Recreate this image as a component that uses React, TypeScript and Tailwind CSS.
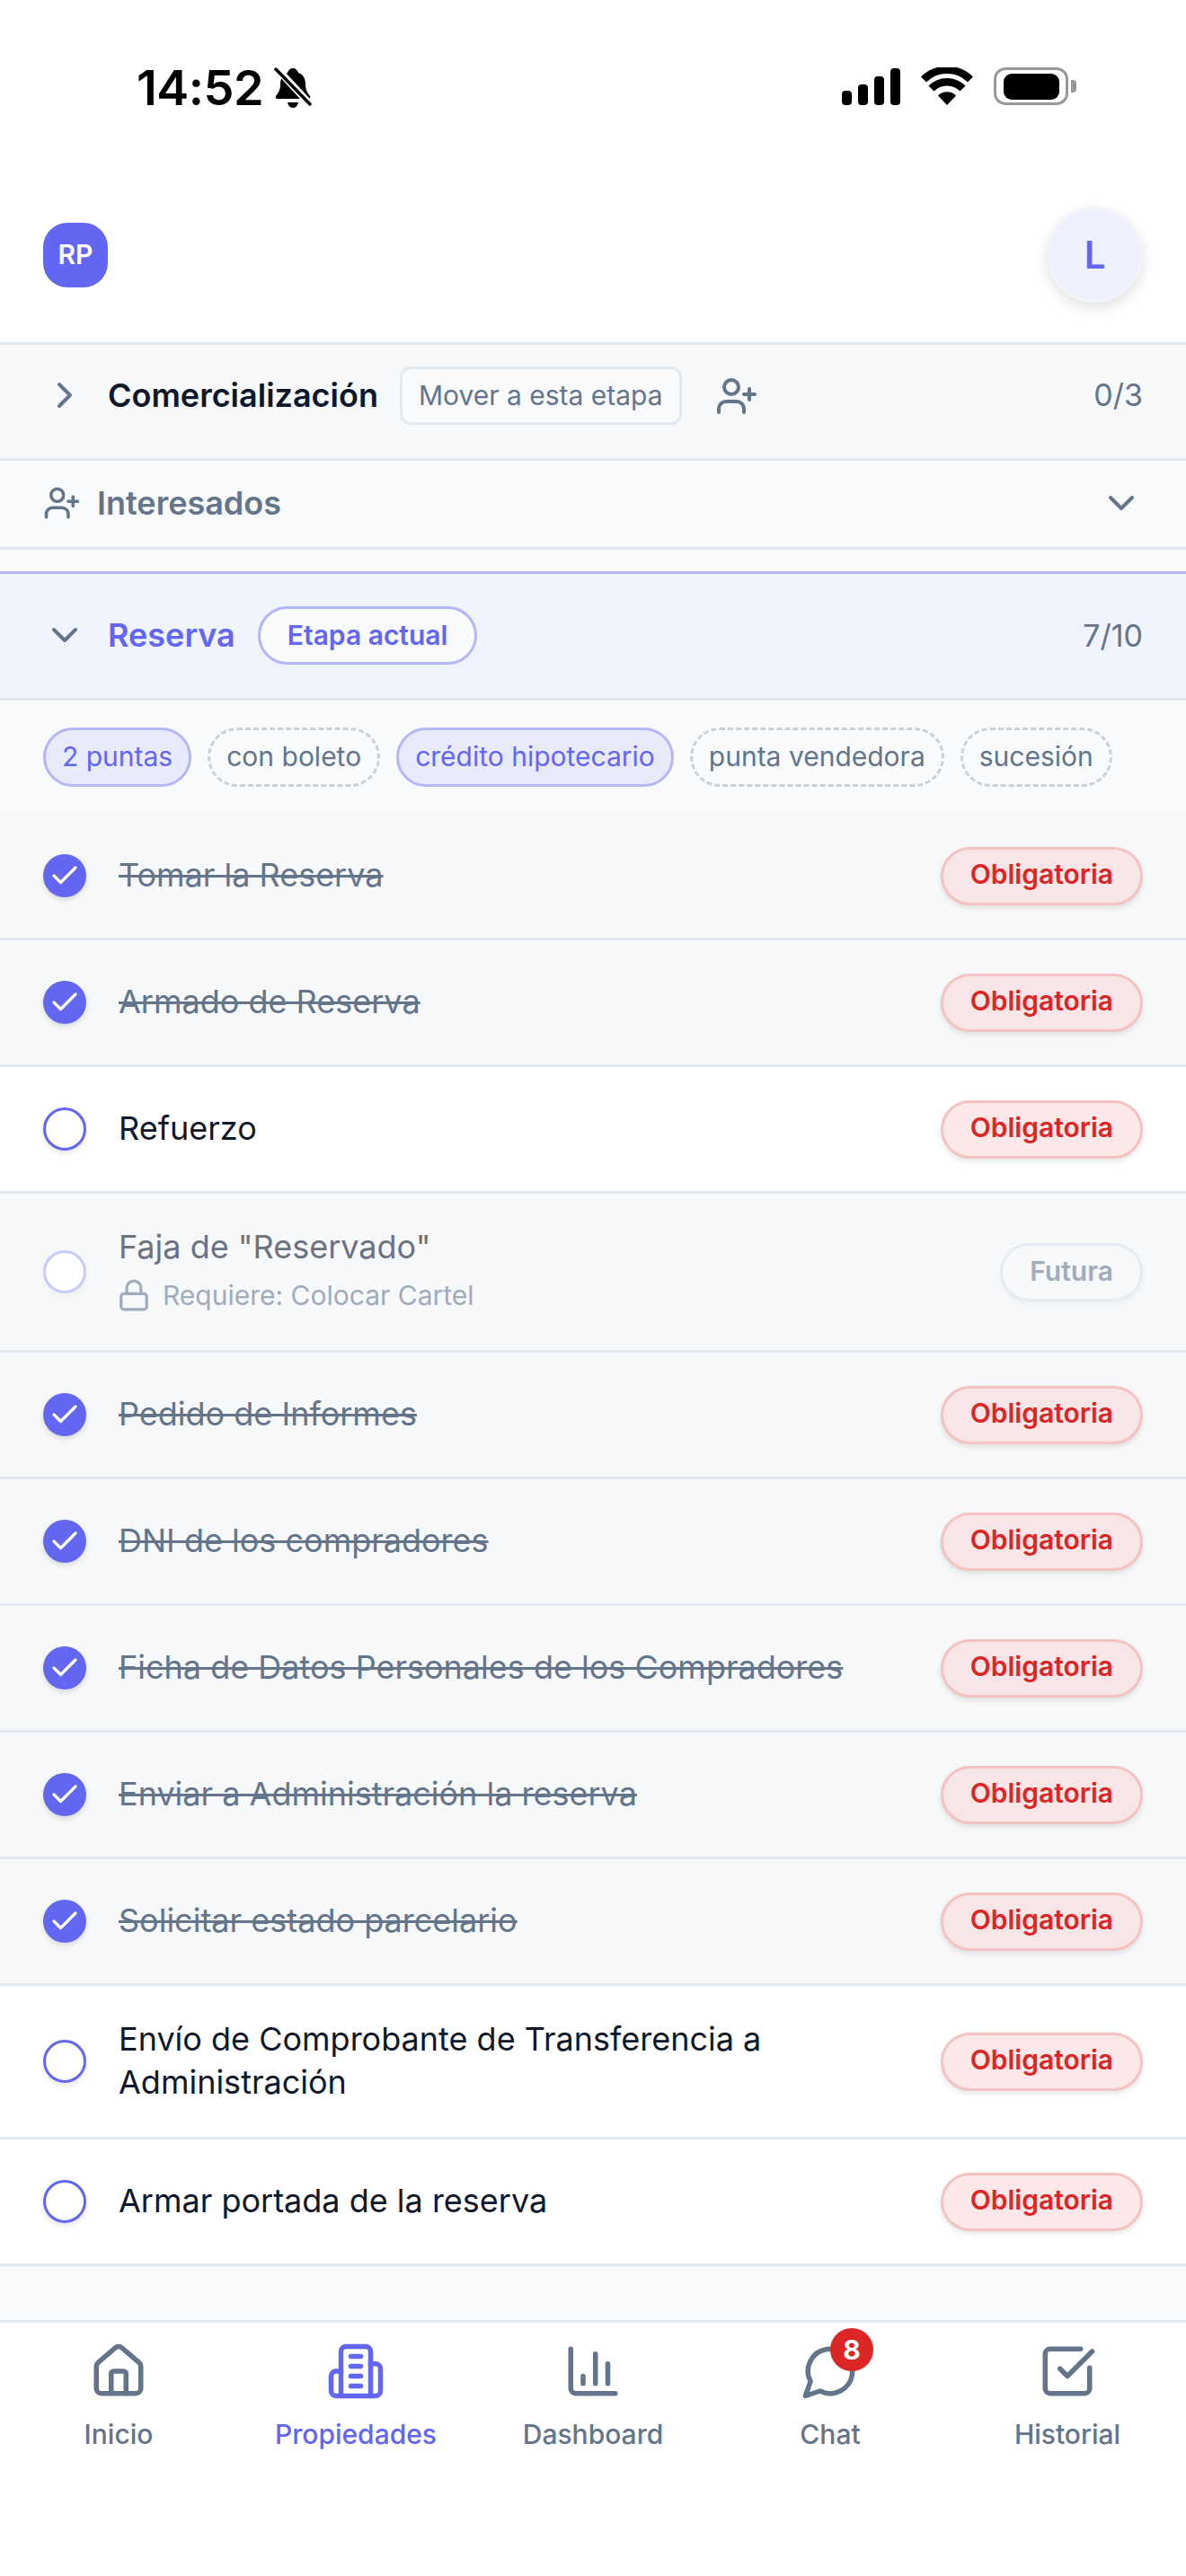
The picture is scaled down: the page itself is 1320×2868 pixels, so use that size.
import { ChartColumn, Check, ChevronDown, ChevronRight, House, Lock, SquareCheckBig, UserPlus } from 'lucide-react';

type TaskState = 'done' | 'open' | 'locked';

interface Task {
  title: string;
  state: TaskState;
  note?: string;
}

const tasks: Task[] = [
  { title: 'Tomar la Reserva', state: 'done' },
  { title: 'Armado de Reserva', state: 'done' },
  { title: 'Refuerzo', state: 'open' },
  { title: 'Faja de "Reservado"', state: 'locked', note: 'Requiere: Colocar Cartel' },
  { title: 'Pedido de Informes', state: 'done' },
  { title: 'DNI de los compradores', state: 'done' },
  { title: 'Ficha de Datos Personales de los Compradores', state: 'done' },
  { title: 'Enviar a Administración la reserva', state: 'done' },
  { title: 'Solicitar estado parcelario', state: 'done' },
  { title: 'Envío de Comprobante de Transferencia a Administración', state: 'open' },
  { title: 'Armar portada de la reserva', state: 'open' },
];

const chips = [
  { label: '2 puntas', active: true },
  { label: 'con boleto', active: false },
  { label: 'crédito hipotecario', active: true },
  { label: 'punta vendedora', active: false },
  { label: 'sucesión', active: false },
];

// older lucide shapes: the installed version draws these two differently
const TowerIcon = ({ size }: { size: number }) => (
  <svg width={size} height={size} viewBox="0 0 24 24" fill="none" stroke="currentColor" strokeWidth="2" strokeLinecap="round" strokeLinejoin="round">
    <path d="M6 22V4a2 2 0 0 1 2-2h8a2 2 0 0 1 2 2v18Z" />
    <path d="M6 12H4a2 2 0 0 0-2 2v6a2 2 0 0 0 2 2h2" />
    <path d="M18 9h2a2 2 0 0 1 2 2v9a2 2 0 0 1-2 2h-2" />
    <path d="M10 6h4" />
    <path d="M10 10h4" />
    <path d="M10 14h4" />
    <path d="M10 18h4" />
  </svg>
);

const BubbleIcon = ({ size }: { size: number }) => (
  <svg width={size} height={size} viewBox="0 0 24 24" fill="none" stroke="currentColor" strokeWidth="2" strokeLinecap="round" strokeLinejoin="round">
    <path d="M7.9 20A9 9 0 1 0 4 16.1L2 22Z" />
  </svg>
);

const navItems = [
  { label: 'Inicio', icon: House },
  { label: 'Propiedades', icon: TowerIcon, active: true },
  { label: 'Dashboard', icon: ChartColumn },
  { label: 'Chat', icon: BubbleIcon, badge: 8 },
  { label: 'Historial', icon: SquareCheckBig },
];

const StatusBar = () => (
  <div className="h-[230px] flex items-start justify-between pt-[75px] pl-[152px] pr-[122px]">
    <div className="flex items-start">
      <span className="text-[54px] leading-[46px] font-semibold text-black tracking-[-0.5px]">14:52</span>
      <svg width="42" height="46" viewBox="0 0 42 46" className="ml-[12px]">
        <path d="M21 1c3 0 5 2 6 5 6 2 8 7 8 13 0 6 2 9 5 13 1 2 0 3-2 3H4c-2 0-3-1-2-3 3-4 5-7 5-13 0-6 2-11 8-13 1-3 3-5 6-5z" fill="#000" />
        <path d="M15 39h12c-1 4-3 6-6 6s-5-2-6-6z" fill="#000" />
        <path d="M2 0 40 41" stroke="#fff" strokeWidth="8" />
        <path d="M2 2 40 41" stroke="#000" strokeWidth="3.5" strokeLinecap="round" />
      </svg>
    </div>
    <div className="flex items-end h-[42px] gap-[23px]">
      <div className="flex items-end gap-[7px]">
        <div className="w-[11px] h-[16px] bg-black rounded-[4px]" />
        <div className="w-[11px] h-[23px] bg-black rounded-[4px]" />
        <div className="w-[11px] h-[32px] bg-black rounded-[4px]" />
        <div className="w-[11px] h-[41px] bg-black rounded-[4px]" />
      </div>
      <svg width="58" height="42" viewBox="0 0 58 42">
        <path d="M29 42 19 31.5a14 14 0 0 1 20 0z" fill="#000" />
        <path d="M11.5 23.5a24.5 24.5 0 0 1 35 0" fill="none" stroke="#000" strokeWidth="8.5" />
        <path d="M3 13.5a37 37 0 0 1 52 0" fill="none" stroke="#000" strokeWidth="8.5" />
      </svg>
      <div className="flex items-center">
        <div className="w-[83px] h-[42px] border-[3px] border-[#999999] rounded-[13px] flex items-center justify-center bg-white">
          <div className="w-[62px] h-[29px] bg-black rounded-[9px]" />
        </div>
        <div className="w-[6px] h-[14px] ml-[3px] bg-[#999999] rounded-r-[4px]" />
      </div>
    </div>
  </div>
);

const TaskRow = ({ task }: { task: Task }) => {
  const done = task.state === 'done';
  const locked = task.state === 'locked';
  const rowBg = task.state === 'open' ? 'bg-white border-[#e2e8f0]' : locked ? 'bg-[#f7f8fa] border-[#e2e8f0]' : 'bg-[#f6f8fa] border-[#e2e8f0]';

  return (
    <div className={`flex items-center min-h-[141px] pl-[48px] pr-[48px] py-[35px] border-b-[3px] ${rowBg}`}>
      {done ? (
        <div className="w-[48px] h-[48px] shrink-0 rounded-full bg-[#6366f1] flex items-center justify-center shadow-[0_3px_6px_rgba(0,0,0,0.12)]">
          <Check size={36} color="#ffffff" strokeWidth={2.2} />
        </div>
      ) : (
        <div className={`w-[48px] h-[48px] shrink-0 rounded-full border-[3px] bg-white shadow-[0_3px_6px_rgba(0,0,0,0.1)] ${locked ? 'border-[#c9caf9] bg-[#f7f8fa] shadow-[0_3px_6px_rgba(0,0,0,0.04)]' : 'border-[#6366f1]'}`} />
      )}
      <div className="ml-[36px] flex-1 pr-[24px] pb-[2px]">
        <div className={`text-[36px] leading-[48px] ${done ? 'text-[#64748b] line-through' : locked ? 'text-[#6b7280]' : 'text-[#0f172a]'}`}>{task.title}</div>
        {task.note && (
          <div className="flex items-center mt-[6px] h-[48px] text-[30px] text-[#a0abbc]">
            <Lock size={38} strokeWidth={2} className="mr-[13px] -ml-[2px]" />
            <span>{task.note}</span>
          </div>
        )}
      </div>
      {locked ? (
        <span className="h-[65px] flex items-center pb-[2px] px-[30px] rounded-full border-[3px] border-[#e8eaf2] bg-[#f6f8fa] text-[30px] font-semibold text-[#a0abbc] shadow-[0_3px_6px_rgba(0,0,0,0.04)]">Futura</span>
      ) : (
        <span className={`h-[65px] flex items-center pb-[3px] px-[30px] rounded-full border-[3px] border-[#f5c2c2] text-[30px] font-semibold text-[#dc2626] shadow-[0_3px_6px_rgba(0,0,0,0.1)] ${done ? 'bg-[#f8e5e7]' : 'bg-[#fce8e8]'}`}>Obligatoria</span>
      )}
    </div>
  );
};

export default function App() {
  return (
    <div className="w-[1320px] h-[2868px] flex flex-col bg-white overflow-hidden font-['Inter',sans-serif]">
      <StatusBar />

      <div className="h-[154px] flex items-start justify-between pl-[48px] pr-[48px] border-b-[3px] border-[#e2e8f0]">
        <div className="h-[107px] flex items-center">
          <div className="w-[72px] h-[72px] rounded-[27px] bg-[#6366f1] flex items-center justify-center text-white text-[30px] font-semibold">RP</div>
        </div>
        <div className="w-[107px] h-[107px] rounded-full bg-[#eff0fd] border-[3px] border-[#f3f4f8] flex items-center justify-center text-[#6366f1] text-[42px] font-semibold shadow-[0_6px_15px_rgba(0,0,0,0.12)]">L</div>
      </div>

      <div className="h-[129px] flex items-start pl-[48px] pr-[48px] pt-[23px] bg-[#f6f8fa] border-b-[3px] border-[#e2e8f0]">
        <div className="h-[65px] flex items-center flex-1">
          <ChevronRight size={48} color="#64748b" strokeWidth={2} />
          <span className="ml-[24px] text-[36px] font-semibold text-[#0f172a]">Comercialización</span>
          <button className="ml-[24px] h-[65px] mt-[2px] px-[18px] rounded-[12px] border-[3px] border-[#e2e8f0] bg-[#f8fafc] text-[30px] text-[#64748b]">Mover a esta etapa</button>
          <UserPlus size={48} color="#64748b" strokeWidth={2} className="ml-[37px] mt-[2px]" />
          <span className="ml-auto text-[34px] text-[#64748b]">0/3</span>
        </div>
      </div>

      <div className="h-[99px] flex items-center pl-[48px] pr-[48px] pb-[2px] bg-[#f8fafc] border-b-[3px] border-[#e2e8f0]">
        <UserPlus size={42} color="#64748b" strokeWidth={2} />
        <span className="ml-[18px] text-[36px] font-semibold text-[#64748b]">Interesados</span>
        <ChevronDown size={48} color="#64748b" strokeWidth={2} className="ml-auto" />
      </div>

      <div className="h-[24px] bg-[#f8fafc]" />

      <div className="h-[144px] flex items-center pl-[48px] pr-[48px] pb-[2px] bg-[#f0f3fb] border-t-[3px] border-b-[3px] border-t-[#b4b6f5] border-b-[#e2e8f0]">
        <ChevronDown size={48} color="#64748b" strokeWidth={2} />
        <span className="ml-[24px] text-[36px] font-semibold text-[#6366f1]">Reserva</span>
        <span className="ml-[25px] h-[65px] flex items-center px-[30px] rounded-full border-[3px] border-[#b4b6f5] bg-[#f8fafc] text-[30px] font-semibold text-[#6366f1]">Etapa actual</span>
        <span className="ml-auto text-[34px] text-[#64748b]">7/10</span>
      </div>

      <div className="flex gap-[18px] pl-[48px] py-[30px] bg-[#f8fafc]">
        {chips.map((chip) => (
          <span
            key={chip.label}
            className={`h-[66px] flex items-center pb-[2px] px-[18px] rounded-full border-[3px] text-[30px] ${chip.active ? 'border-[#b4b6f5] bg-[#e8eafa] text-[#6366f1]' : 'border-dashed border-[#cbd0d8] text-[#64748b]'}`}
          >
            {chip.label}
          </span>
        ))}
      </div>

      {tasks.map((task) => (
        <TaskRow key={task.title} task={task} />
      ))}

      <div className="h-[63px] shrink-0 bg-[#f8fafc] border-b-[3px] border-[#e2e8f0]" />

      <nav className="flex-1 grid grid-cols-5 bg-white">
        {navItems.map((item) => {
          const Icon = item.icon;
          return (
            <div key={item.label} className={`flex flex-col items-center pt-[21px] ${item.active ? 'text-[#6366f1]' : 'text-[#64748b]'}`}>
              <div className="relative w-[66px] h-[66px]">
                <Icon size={66} />
                {item.badge && (
                  <span className="absolute -top-[15px] left-[33px] w-[48px] h-[48px] rounded-full bg-[#dc2626] flex items-center justify-center text-white text-[30px] font-bold">{item.badge}</span>
                )}
              </div>
              <span className="mt-[15px] text-[30px] leading-[45px] font-medium">{item.label}</span>
            </div>
          );
        })}
      </nav>
    </div>
  );
}
